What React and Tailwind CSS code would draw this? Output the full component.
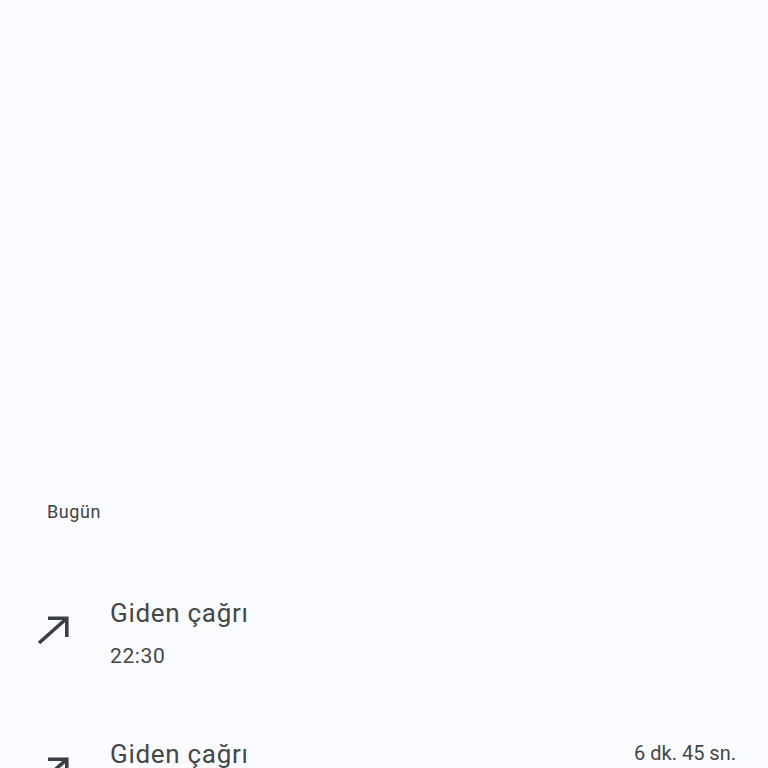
const font = { fontFamily: 'Roboto, "Noto Sans", sans-serif' }

function CallMadeIcon() {
  return (
    <svg width="36" height="32" viewBox="0 0 36 32" fill="none" className="shrink-0">
      <path d="M4 29 L31 5" stroke="#3c3f41" strokeWidth="3.6" strokeLinecap="butt" />
      <path d="M13 4.2 H31.8 V23" stroke="#3c3f41" strokeWidth="3.6" fill="none" strokeLinecap="butt" />
    </svg>
  )
}

function CallRow({ title, time, duration }) {
  return (
    <div className="flex items-start h-[141px]">
      <div className="w-[110px] pl-[35px] pt-[18px] shrink-0">
        <CallMadeIcon />
      </div>
      <div className="flex-1 flex flex-col">
        <p className="text-[26px] leading-[34px] text-[#444746] tracking-[0.7px]">{title}</p>
        {time && (
          <p className="text-[21px] leading-[28px] mt-[12px] text-[#444746] tracking-[0.6px]">{time}</p>
        )}
      </div>
      {duration && (
        <p className="text-[20px] leading-[28px] mt-[2px] pr-[32px] text-[#444746]">{duration}</p>
      )}
    </div>
  )
}

export default function App() {
  return (
    <div className="w-[768px] h-[768px] overflow-hidden bg-[#fafbfe]" style={font}>
      <div className="pt-[500px] pl-[47px]">
        <p className="text-[18px] leading-[24px] text-[#3f4244] tracking-[0.6px]">Bugün</p>
      </div>
      <div className="mt-[72px]">
        <CallRow title="Giden çağrı" time="22:30" />
        <CallRow title="Giden çağrı" duration="6 dk. 45 sn." />
      </div>
    </div>
  )
}
